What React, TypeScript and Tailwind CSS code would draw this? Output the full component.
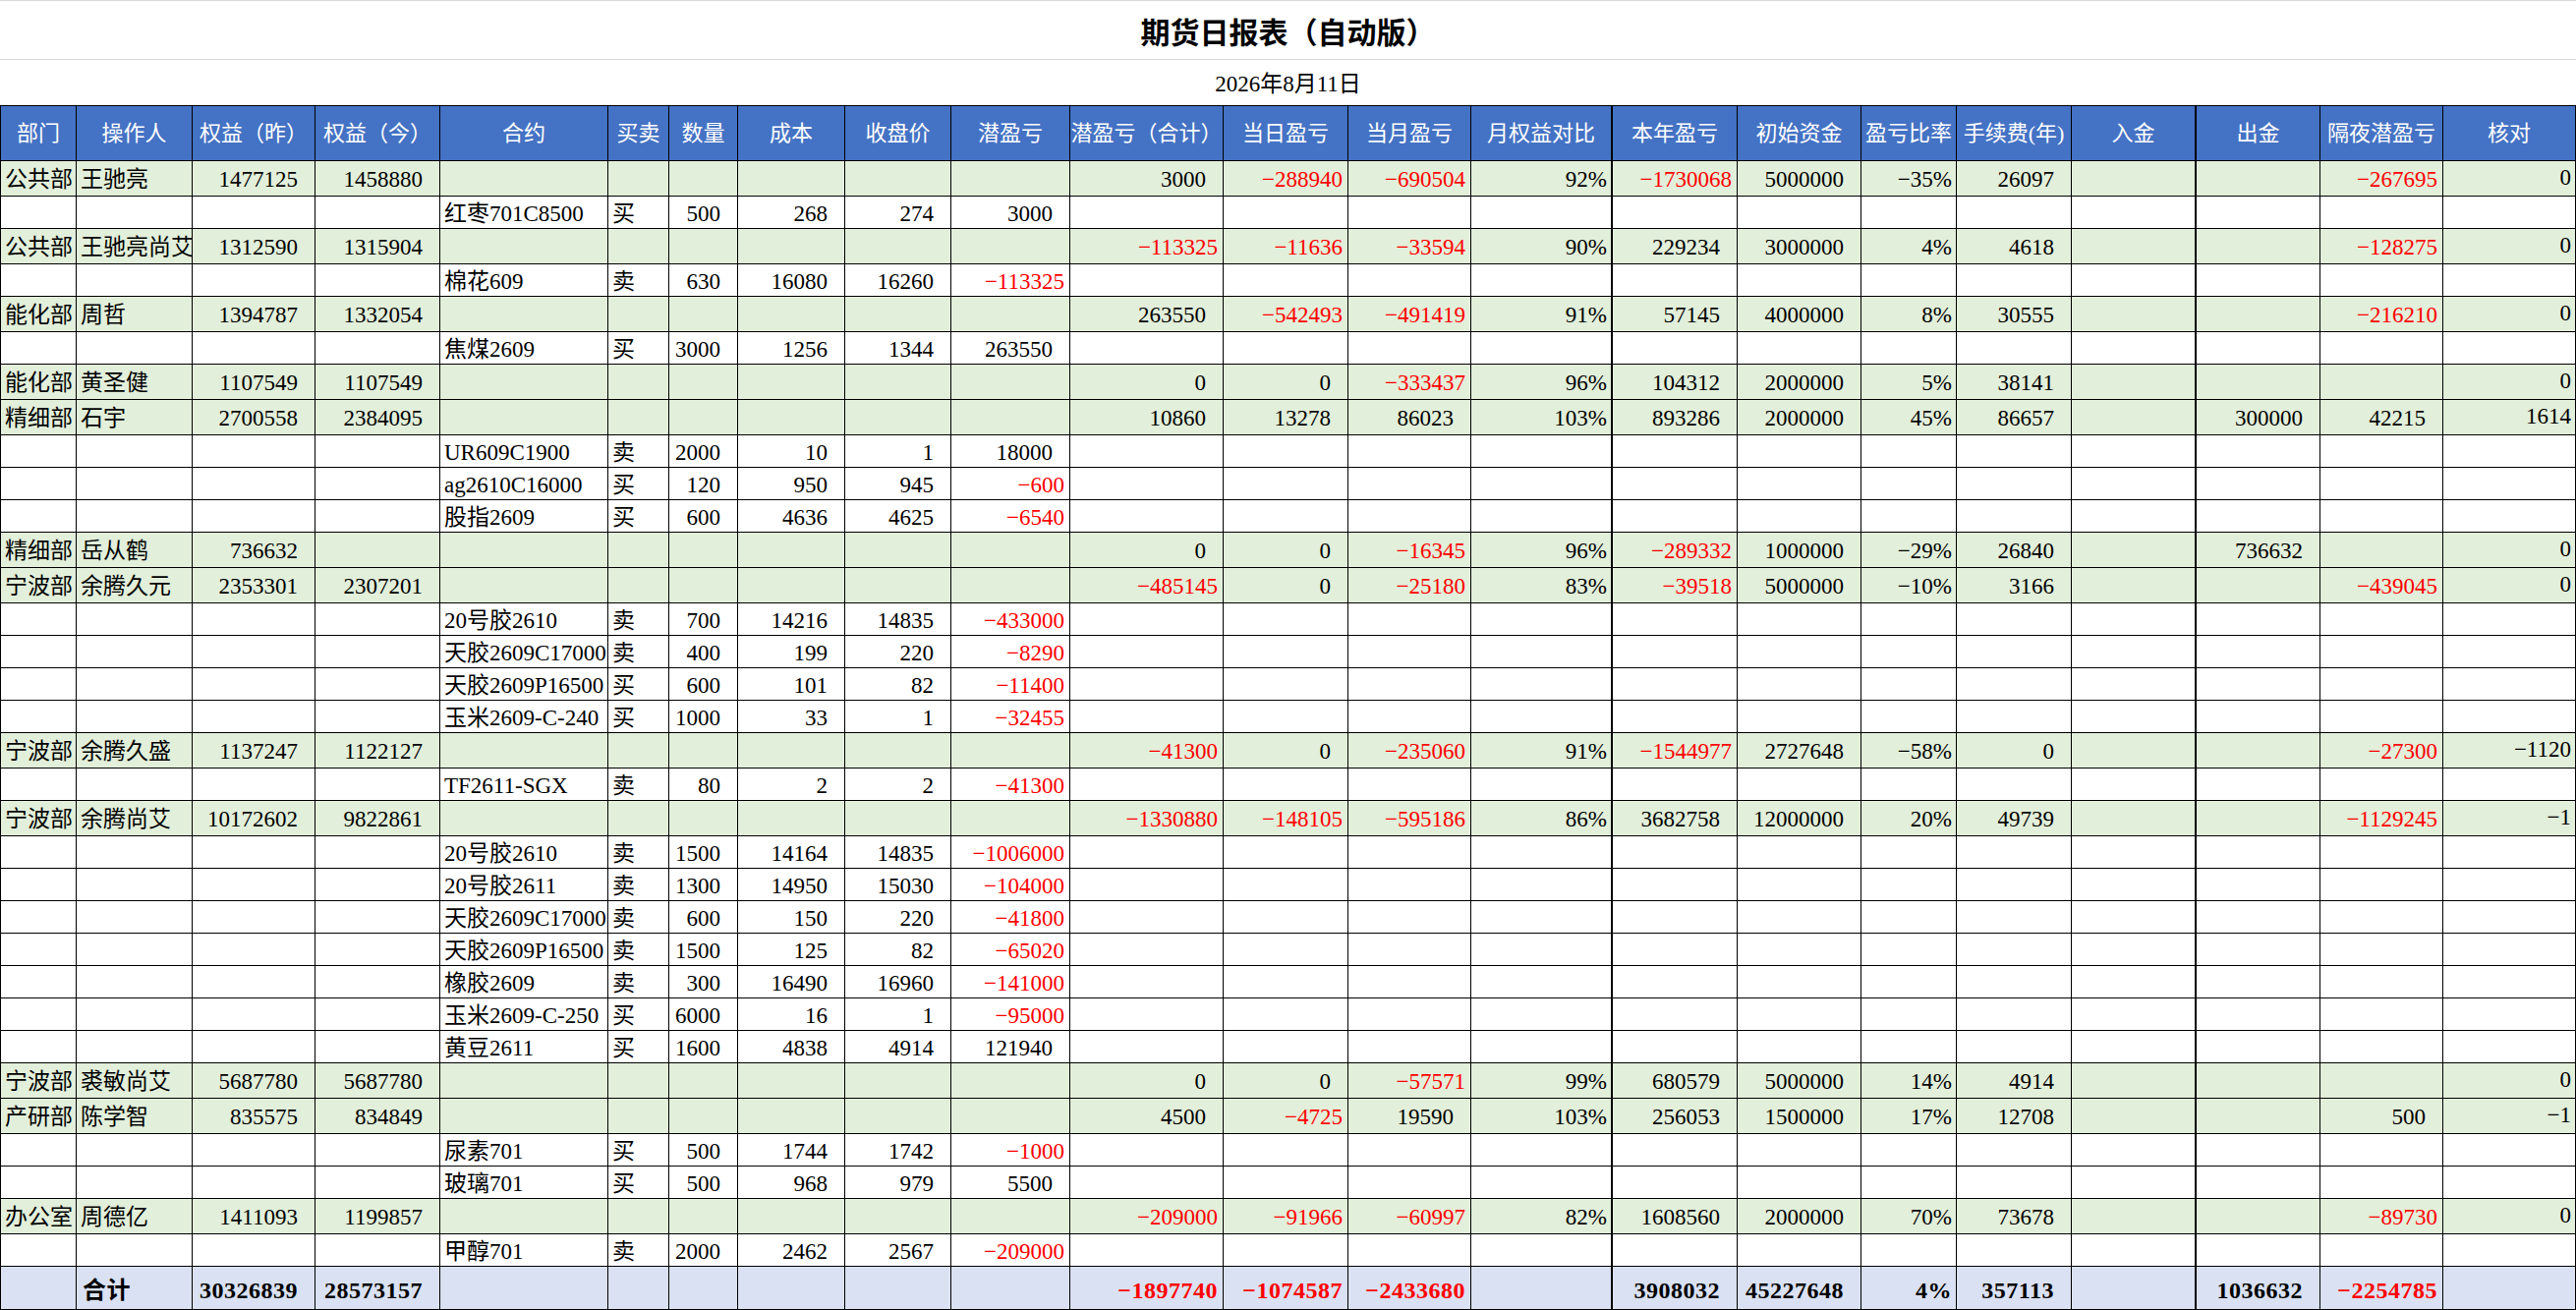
type V = string | number | null;

interface Row {
  kind: "g" | "w" | "t";
  cells: V[];
}

const HEADERS = [
  "部门", "操作人", "权益（昨）", "权益（今）", "合约", "买卖", "数量", "成本", "收盘价", "潜盈亏",
  "潜盈亏（合计）", "当日盈亏", "当月盈亏", "月权益对比", "本年盈亏", "初始资金", "盈亏比率", "手续费(年)",
  "入金", "出金", "隔夜潜盈亏", "核对",
];

const TEXT_COLS = [0, 1, 4, 5];

// green summary row: dept, name, equity y/t, then the 12 right-hand values
const g = (dept: string, name: string, y: V, t: V, rest: V[]): Row => ({
  kind: "g",
  cells: [dept, name, y, t, null, null, null, null, null, null, ...rest],
});

// white position row
const w = (contract: string, side: string, qty: number, cost: number, close: number, pnl: number): Row => ({
  kind: "w",
  cells: [null, null, null, null, contract, side, qty, cost, close, pnl, ...Array(12).fill(null)],
});

const ROWS: Row[] = [
  g("公共部", "王驰亮", 1477125, 1458880, [3000, -288940, -690504, "92%", -1730068, 5000000, "-35%", 26097, null, null, -267695, 0]),
  w("红枣701C8500", "买", 500, 268, 274, 3000),
  g("公共部", "王驰亮尚艾", 1312590, 1315904, [-113325, -11636, -33594, "90%", 229234, 3000000, "4%", 4618, null, null, -128275, 0]),
  w("棉花609", "卖", 630, 16080, 16260, -113325),
  g("能化部", "周哲", 1394787, 1332054, [263550, -542493, -491419, "91%", 57145, 4000000, "8%", 30555, null, null, -216210, 0]),
  w("焦煤2609", "买", 3000, 1256, 1344, 263550),
  g("能化部", "黄圣健", 1107549, 1107549, [0, 0, -333437, "96%", 104312, 2000000, "5%", 38141, null, null, null, 0]),
  g("精细部", "石宇", 2700558, 2384095, [10860, 13278, 86023, "103%", 893286, 2000000, "45%", 86657, null, 300000, 42215, 1614]),
  w("UR609C1900", "卖", 2000, 10, 1, 18000),
  w("ag2610C16000", "买", 120, 950, 945, -600),
  w("股指2609", "买", 600, 4636, 4625, -6540),
  g("精细部", "岳从鹤", 736632, null, [0, 0, -16345, "96%", -289332, 1000000, "-29%", 26840, null, 736632, null, 0]),
  g("宁波部", "余腾久元", 2353301, 2307201, [-485145, 0, -25180, "83%", -39518, 5000000, "-10%", 3166, null, null, -439045, 0]),
  w("20号胶2610", "卖", 700, 14216, 14835, -433000),
  w("天胶2609C17000", "卖", 400, 199, 220, -8290),
  w("天胶2609P16500", "买", 600, 101, 82, -11400),
  w("玉米2609-C-240", "买", 1000, 33, 1, -32455),
  g("宁波部", "余腾久盛", 1137247, 1122127, [-41300, 0, -235060, "91%", -1544977, 2727648, "-58%", 0, null, null, -27300, -1120]),
  w("TF2611-SGX", "卖", 80, 2, 2, -41300),
  g("宁波部", "余腾尚艾", 10172602, 9822861, [-1330880, -148105, -595186, "86%", 3682758, 12000000, "20%", 49739, null, null, -1129245, -1]),
  w("20号胶2610", "卖", 1500, 14164, 14835, -1006000),
  w("20号胶2611", "卖", 1300, 14950, 15030, -104000),
  w("天胶2609C17000", "卖", 600, 150, 220, -41800),
  w("天胶2609P16500", "卖", 1500, 125, 82, -65020),
  w("橡胶2609", "卖", 300, 16490, 16960, -141000),
  w("玉米2609-C-250", "买", 6000, 16, 1, -95000),
  w("黄豆2611", "买", 1600, 4838, 4914, 121940),
  g("宁波部", "裘敏尚艾", 5687780, 5687780, [0, 0, -57571, "99%", 680579, 5000000, "14%", 4914, null, null, null, 0]),
  g("产研部", "陈学智", 835575, 834849, [4500, -4725, 19590, "103%", 256053, 1500000, "17%", 12708, null, null, 500, -1]),
  w("尿素701", "买", 500, 1744, 1742, -1000),
  w("玻璃701", "买", 500, 968, 979, 5500),
  g("办公室", "周德亿", 1411093, 1199857, [-209000, -91966, -60997, "82%", 1608560, 2000000, "70%", 73678, null, null, -89730, 0]),
  w("甲醇701", "卖", 2000, 2462, 2567, -209000),
  {
    kind: "t",
    cells: [null, "合计", 30326839, 28573157, null, null, null, null, null, null, -1897740, -1074587, -2433680, null, 3908032, 45227648, "4%", 357113, null, 1036632, -2254785, null],
  },
];

const GRID =
  "grid grid-cols-[77px_118px_125px_127px_171px_62px_70px_109px_108px_121px_156px_127px_125px_144px_127px_126px_97px_117px_127px_126px_125px_135px]";

// numbers and percentages get a real minus sign; text cells stay as typed
const fmt = (v: V, col: number) => {
  if (v === null) return "";
  if (TEXT_COLS.includes(col)) return String(v);
  return String(v).replace(/^-/, "−");
};

function Cell({ v, col, kind }: { v: V; col: number; kind: Row["kind"] }) {
  const edge = col === 13 || col === 18 ? "border-r-2" : "border-r";
  const bg = kind === "g" ? "bg-[#E2EFDA]" : kind === "t" ? "bg-[#D9E1F2]" : "bg-white";

  let align = "items-center pt-[4px] justify-end pr-[17px]";
  let color = "text-black";
  if (TEXT_COLS.includes(col)) {
    align = kind === "t" ? "items-center pt-[4px] justify-start pl-[6px]" : "items-center pt-[4px] justify-start pl-[4px]";
  } else if (col === 21) {
    align = "items-end pb-[1px] justify-end pr-[4px]";
  } else if (typeof v === "string") {
    align = "items-center pt-[4px] justify-end pr-[4px]";
  } else if (typeof v === "number" && v < 0) {
    align = "items-center pt-[4px] justify-end pr-[5px]";
    color = "text-[#FF0000]";
  }

  return (
    <div className={`flex overflow-hidden whitespace-nowrap border-b border-black ${edge} ${bg} ${align} ${color}`}>
      {fmt(v, col)}
    </div>
  );
}

export default function App() {
  return (
    <div className="w-[2621px] bg-white text-black font-['Liberation_Serif','Noto_Sans_CJK_SC',serif]">
      {/* title */}
      <div className="flex h-[61px] items-center justify-center border-t border-b border-[#dadada] pt-[2px] text-[30px] font-bold font-['Noto_Sans_CJK_SC',sans-serif]">
        期货日报表（自动版）
      </div>
      <div className="flex h-[46px] items-center justify-center pt-[4px] text-[23px]">2026年8月11日</div>

      {/* sheet */}
      <div className="border-l border-t border-black">
        <div className={`${GRID} h-[56px]`}>
          {HEADERS.map((h, i) => (
            <div
              key={h}
              className={`flex items-center justify-center overflow-hidden whitespace-nowrap border-b border-black bg-[#4472C4] text-[22px] text-white ${
                i === 13 || i === 18 ? "border-r-2" : "border-r"
              }`}
            >
              {h}
            </div>
          ))}
        </div>

        {ROWS.map((r, ri) => (
          <div
            key={ri}
            className={`${GRID} ${
              r.kind === "g" ? "h-[36px] text-[23px]" : r.kind === "w" ? "h-[33px] text-[23px]" : "h-[44px] text-[24px] font-bold tracking-[0.5px]"
            }`}
          >
            {r.cells.map((v, ci) => (
              <Cell key={ci} v={v} col={ci} kind={r.kind} />
            ))}
          </div>
        ))}
      </div>
    </div>
  );
}
